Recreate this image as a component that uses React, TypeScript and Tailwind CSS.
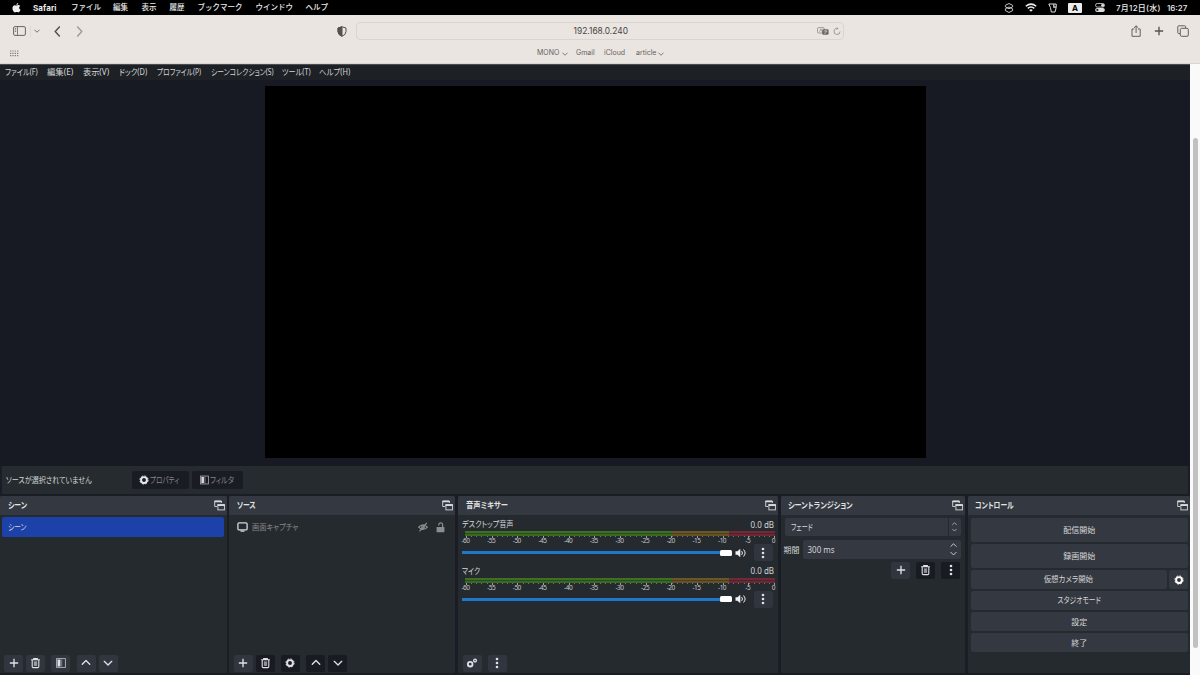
import type { ReactNode } from 'react';
import clsx from 'clsx';

type IconProps = { className?: string };

const macMenu = [
  { label: 'ファイル', w: 'w-[42px]' },
  { label: '編集', w: 'w-[28.5px]' },
  { label: '表示', w: 'w-[28px]' },
  { label: '履歴', w: 'w-[28px]' },
  { label: 'ブックマーク', w: 'w-[58px]' },
  { label: 'ウインドウ', w: 'w-[50px]' },
  { label: 'ヘルプ', w: 'w-[30px]' },
];

const obsMenu = [
  { label: 'ファイル(F)', w: 'w-[42px] scale-x-[.84]' },
  { label: '編集(E)', w: 'w-[36px] scale-x-[.98]' },
  { label: '表示(V)', w: 'w-[35.5px] scale-x-[.96]' },
  { label: 'ドック(D)', w: 'w-[38px] scale-x-[.87]' },
  { label: 'プロファイル(P)', w: 'w-[54px] scale-x-[.79]' },
  { label: 'シーンコレクション(S)', w: 'w-[71px] scale-x-[.8]' },
  { label: 'ツール(T)', w: 'w-[37.5px] scale-x-[.84]' },
  { label: 'ヘルプ(H)', w: 'w-[40px] scale-x-[.87]' },
];

const ticks = [-60, -55, -50, -45, -40, -35, -30, -25, -20, -15, -10, -5, 0];

function Apple() {
  return (
    <svg viewBox="0 0 16 18" className="w-[9px] h-[10px]" fill="#eee">
      <path d="M11 0c.2 1.800-1.300 3.700-3.200 3.700C7.600 2 9.300.2 11 0zM8.100 4.700c.8 0 1.800-.9 3.300-.9 1.300 0 2.600.7 3.300 1.800-2.900 1.600-2.400 5.600.6 6.700-.7 1.900-2.200 4.700-3.900 4.700-1.200 0-1.600-.8-3.100-.8s-2 .8-3.100.8C3 17 .7 12.800.7 9.400c0-3.400 2.200-5.500 4.300-5.500 1.300 0 2.300.8 3.100.8z" />
    </svg>
  );
}

function Chevron({ dir, className }: IconProps & { dir: 'up' | 'down' | 'left' | 'right' }) {
  const d = {
    up: 'M1.500 7.500l4.500-4.500L10.500 7.500',
    down: 'M1.500 4L6 8.500l4.500-4.500',
    left: 'M8 1L3.500 6 8 11',
    right: 'M4 1l4.500 5L4 11',
  }[dir];
  return (
    <svg viewBox="0 0 12 12" className={className} fill="none" stroke="currentColor" strokeWidth="1.600" strokeLinecap="round" strokeLinejoin="round">
      <path d={d} />
    </svg>
  );
}

function Plus({ className }: IconProps) {
  return (
    <svg viewBox="0 0 12 12" className={className} fill="none" stroke="currentColor" strokeWidth="1.600">
      <path d="M6 1v10M1 6h10" />
    </svg>
  );
}

function Trash() {
  return (
    <svg viewBox="0 0 12 12" className="w-[11px] h-[12px]" fill="none" stroke="currentColor" strokeWidth="1.200">
      <path d="M1.200 2.400h9.600M4 2.200V1.200h4v1" />
      <path d="M2.400 2.600v7.200q0 1.200 1.200 1.200h4.800q1.200 0 1.200-1.200V2.600" />
      <path d="M4.200 4.200h3.600v5H4.200z" fill="currentColor" fillOpacity=".6" stroke="none" />
    </svg>
  );
}

function Gear({ className }: IconProps) {
  return (
    <svg viewBox="0 0 12 12" className={className} fill="none" stroke="currentColor">
      <circle cx="6" cy="6" r="3.500" strokeWidth="2.300" />
      <circle cx="6" cy="6" r="4.900" strokeWidth="1.200" strokeDasharray="2.200 1.648" />
    </svg>
  );
}

function Dots() {
  return (
    <svg viewBox="0 0 4 12" className="w-[4px] h-[12px]" fill="currentColor">
      <circle cx="2" cy="2" r="1.300" />
      <circle cx="2" cy="6" r="1.300" />
      <circle cx="2" cy="10" r="1.300" />
    </svg>
  );
}

function Filter({ className }: IconProps) {
  return (
    <svg viewBox="0 0 10 10" className={className} fill="none">
      <rect x=".6" y=".6" width="8.800" height="8.800" stroke="currentColor" strokeOpacity=".75" strokeWidth=".9" />
      <path d="M1.500 1.500h2.900v7H1.500z" fill="currentColor" />
      <path d="M4.700 1.500h1.600v7H4.700z" fill="currentColor" fillOpacity=".35" />
    </svg>
  );
}

function Popout() {
  return (
    <svg viewBox="0 0 11 11" className="w-[11px] h-[11px]" fill="none" stroke="#d8dadd">
      <path d="M3 6.500H.7V1h6.600v2" strokeWidth=".9" />
      <path d="M.5 1.500h7" strokeWidth="1.500" />
      <rect x="3.900" y="4.600" width="6.500" height="5.300" strokeWidth=".9" />
      <path d="M3.500 5.200h7.300" strokeWidth="1.600" />
    </svg>
  );
}

function Speaker() {
  return (
    <svg viewBox="0 0 12 10" className="w-[12px] h-[10px]" fill="none" stroke="#f1f1f1" strokeWidth="1">
      <path d="M.5 3.200h2L5.300.8v8.400L2.500 6.800h-2z" fill="#f1f1f1" stroke="none" />
      <path d="M6.700 3.100q1.500 1.900 0 3.800M8.500 1.500q3.200 3.500 0 7" />
    </svg>
  );
}

// Condensed kana, as the Windows UI fonts set them
function Kana({ center, className, children }: { center?: boolean; className: string; children: ReactNode }) {
  return (
    <span className={clsx('block whitespace-nowrap text-[8.5px]', center ? 'origin-center' : 'origin-left', className)}>{children}</span>
  );
}

function MacBar() {
  return (
    <div className="flex items-center h-[15px] bg-black text-[#ececec] text-[7.5px] font-medium">
      <div className="w-[33px] pl-[12px]"><Apple /></div>
      <span className="w-[38px] text-[8px] font-bold tracking-[0.1px]">Safari</span>
      {macMenu.map((item) => (
        <span key={item.label} className={clsx('shrink-0 whitespace-nowrap', item.w)}>{item.label}</span>
      ))}
      <div className="ml-auto flex items-center pr-[11px]">
        <svg viewBox="0 0 10 10" className="w-[10px] h-[10px] mr-[11px]" fill="none" stroke="#ddd" strokeWidth=".9">
          <path d="M5 .5l3.600 1.800v1.500L5 5.800 1.400 3.800V2.300zM1.400 5.800L5 4l3.600 1.800v1.800L5 9.500 1.400 7.600z" />
        </svg>
        <svg viewBox="0 0 12 9" className="w-[12px] h-[9px] mr-[11px]" fill="none" stroke="#eee" strokeWidth="1.500">
          <path d="M.8 3.300q5.200-4.400 10.400 0M2.700 5.300q3.300-2.700 6.600 0" />
          <path d="M4.200 6.900q1.800-1.300 3.600 0L6 8.700z" fill="#eee" stroke="none" />
        </svg>
        <svg viewBox="0 0 9 10" className="w-[9px] h-[10px] mr-[11px]" fill="none" stroke="#ddd" strokeWidth="1">
          <path d="M.8 1h7.400v3.500L7 9H3.300Q2.800 4 .8 1z" />
          <path d="M5.800 1v3.200h2.300" strokeWidth="1.200" />
        </svg>
        <span className="w-[14px] h-[10px] rounded-[1px] bg-[#ececec] text-black text-[8px] leading-[10.5px] font-bold text-center mr-[13px]">A</span>
        <svg viewBox="0 0 10 9" className="w-[10px] h-[9px] mr-[11px]">
          <rect x=".5" y=".5" width="9" height="3.600" rx="1.800" fill="none" stroke="#ddd" strokeWidth=".8" />
          <circle cx="7.600" cy="2.300" r="1.500" fill="#ddd" />
          <rect x=".2" y="4.900" width="9.600" height="4" rx="1.900" fill="#ddd" />
          <circle cx="2.400" cy="6.900" r="1.100" fill="#222" />
        </svg>
        <span className="w-[51px] text-[8px] tracking-[0.25px] whitespace-nowrap">7月12日(水)</span>
        <span className="w-[22px] text-[8px] whitespace-nowrap">16:27</span>
      </div>
    </div>
  );
}

function SafariBar() {
  return (
    <div className="h-[49px] bg-[#eae5e1] border-b border-[#d9d7d6] text-[#56524f]">
      <div className="flex items-center h-[32px]">
        <svg viewBox="0 0 13 10" className="w-[13px] h-[10px] ml-[12.500px]" fill="none" stroke="#686461" strokeWidth="1">
          <rect x=".6" y=".6" width="11.800" height="8.800" rx="1.300" />
          <path d="M4.500.6v8.800M1.900 2.500h1.300M1.900 4h1.300M1.900 5.500h1.300" strokeWidth=".8" />
        </svg>
        <span className="w-px h-[11px] ml-[4.500px] bg-[#dedad6]" />
        <Chevron dir="down" className="w-[6px] h-[6px] ml-[3px]" />
        <Chevron dir="left" className="w-[11px] h-[11px] ml-[12px]" />
        <Chevron dir="right" className="w-[11px] h-[11px] ml-[10.500px] text-[#a09c99]" />
        <svg viewBox="0 0 10 11" className="w-[10px] h-[11px] ml-[252.500px]" fill="none" stroke="#55514e" strokeWidth="1">
          <path d="M5 .8L9 2v3.500Q9 8.800 5 10.300 1 8.800 1 5.500V2z" />
          <path d="M5 .8L1 2v3.500Q1 8.800 5 10.300z" fill="#55514e" />
        </svg>
        <div className="flex items-center w-[488px] h-[18px] ml-[9px] rounded-[4px] border border-[#d9d5d1]">
          <span className="flex-1 pl-[28px] text-center text-[8.400px] leading-none text-[#474442]">192.168.0.240</span>
          <svg viewBox="0 0 12 9" className="w-[12px] h-[9px] mr-[4px]" fill="none">
            <rect x=".5" y=".6" width="6.800" height="5.400" rx="1.300" stroke="#8c8885" strokeWidth=".8" />
            <path d="M2.500 4.800L4 1.800l1.200 3" stroke="#8c8885" strokeWidth=".7" />
            <rect x="5.200" y="2.300" width="6.400" height="5.500" rx="1.300" fill="#6c6865" />
            <path d="M6.800 4h3.400M8.500 3.200V4M7.200 6.500q2.300-.8 2.500-2.500" stroke="#eae5e1" strokeWidth=".6" />
          </svg>
          <svg viewBox="0 0 8 9" className="w-[8px] h-[9px] mr-[2.500px]" fill="none" stroke="#8c8885" strokeWidth=".8">
            <path d="M7 4.500a3 3 0 1 1-2.200-2.900L4 .5M4.800 1.600L3.600 2.800" />
          </svg>
        </div>
        <svg viewBox="0 0 10 12" className="w-[10px] h-[12px] ml-[287px]" fill="none" stroke="#63605d" strokeWidth="1">
          <path d="M3.300 4H1v7.300h8.200V4H6.900M5.100 8V.9M3 2.800L5.100.8l2.100 2" />
        </svg>
        <Plus className="w-[10px] h-[10px] ml-[13px]" />
        <svg viewBox="0 0 12 12" className="w-[12px] h-[12px] ml-[13px]" fill="none" stroke="#63605d" strokeWidth="1">
          <path d="M3 8.600H1.700q-.9 0-.9-.9V1.700q0-.9.9-.9h6q.9 0 .9.900V3" />
          <rect x="3.300" y="3.300" width="8" height="8" rx="1.300" />
        </svg>
      </div>
      <div className="flex items-center h-[12px] text-[7px] text-[#65615e]">
        <svg viewBox="0 0 9 7" className="w-[9px] h-[7px] ml-[10px]" stroke="#817d7a" strokeWidth="1.200" strokeDasharray="1.300 1.030">
          <path d="M0 1h9M0 3.300h9M0 5.600h9" />
        </svg>
        <div className="flex items-center ml-[518px] pt-px whitespace-nowrap">
          <span className="w-[24.500px]">MONO</span>
          <Chevron dir="down" className="w-[6px] h-[6px] mr-[8.500px]" />
          <span className="w-[28px]">Gmail</span>
          <span className="w-[32px]">iCloud</span>
          <span className="w-[22px]">article</span>
          <Chevron dir="down" className="w-[6px] h-[6px]" />
        </div>
      </div>
    </div>
  );
}

function ToolButton({ dark, className, children }: { dark?: boolean; className?: string; children: ReactNode }) {
  return (
    <button className={clsx('flex shrink-0 items-center justify-center w-[19px] h-[17px] rounded-[2px] text-[#dfe1e4]', dark ? 'bg-[#181b22]' : 'bg-[#31353e]', className)}>
      {children}
    </button>
  );
}

function Dock({ title, squeeze, className, children }: { title: string; squeeze: string; className: string; children: ReactNode }) {
  return (
    <section className={clsx('flex shrink-0 flex-col h-[177px] bg-[#252a2f]', className)}>
      <header className="flex items-center justify-between h-[19px] pl-[7.500px] pr-[2px] rounded-t-[2px] bg-[#343840] font-semibold text-[#e2e3e5]">
        <Kana className={squeeze}>{title}</Kana>
        <Popout />
      </header>
      {children}
    </section>
  );
}

function Mixer({ name, squeeze }: { name: string; squeeze: string }) {
  return (
    <div className="h-[46.500px]">
      <div className="flex items-center justify-between h-[13px] pr-[4px]">
        <Kana className={squeeze}>{name}</Kana>
        <span>0.0 dB</span>
      </div>
      <div className="flex h-[5px] ml-[3px] w-[310px]">
        <div className="w-[207px] bg-[linear-gradient(#3d7023_40%,#2b4a1f_40%,#2b4a1f_60%,#3a6922_60%)]" />
        <div className="w-[57px] bg-[linear-gradient(#6b5726_40%,#4b3e22_40%,#4b3e22_60%,#665325_60%)]" />
        <div className="flex-1 bg-[linear-gradient(#712936_40%,#4e222b_40%,#4e222b_60%,#6c2834_60%)]" />
      </div>
      <div className="ml-[4px] w-[309px] h-px bg-[repeating-linear-gradient(90deg,#70757a_0_1px,transparent_1px_5.140px)]" />
      <div className="flex justify-between w-[320px] -ml-[2.500px] h-[7px] text-[6.500px] leading-[7px] text-[#c6c8ca] tracking-[-0.500px]">
        {ticks.map((t) => (
          <span key={t} className="relative w-[12px] text-center">
            <i className="absolute left-[6.500px] -top-px w-px h-[2px] bg-[#a0a2a4]" />
            {t}
          </span>
        ))}
      </div>
      <div className="flex items-center h-[17px]">
        <div className="w-[258px] h-[3px] bg-[#1f76ca]" />
        <div className="w-[12px] h-[6px] rounded-[1.500px] bg-white mr-[3px]" />
        <Speaker />
        <ToolButton className="ml-[6.500px]"><Dots /></ToolButton>
      </div>
    </div>
  );
}

function ControlButton({ className, children }: { className: string; children: ReactNode }) {
  return (
    <button className={clsx('flex items-center justify-center rounded-[2px] bg-[#343840]', className)}>{children}</button>
  );
}

function Obs() {
  return (
    <div className="w-[1190px] h-[611px] bg-[#1a1d25] text-[8px] leading-none text-[#d4d6d8] [font-family:'Noto_Sans','Noto_Sans_CJK_JP',sans-serif] [font-feature-settings:'palt']">
      <nav className="flex items-center h-[16px] pl-[5px] bg-[#1d2126] border-t border-[#4a4c50] text-[8.5px] whitespace-nowrap">
        {obsMenu.map((item) => (
          <span key={item.label} className={clsx('shrink-0 origin-left', item.w)}>{item.label}</span>
        ))}
      </nav>
      <div className="h-[386px] pt-[6px] pl-[265px] bg-[#181a23]">
        <div className="w-[660.500px] h-[371.500px] bg-black" />
      </div>
      <div className="flex items-center h-[28px] ml-[2px] mr-[2px] pl-[4px] bg-[#262b2f]">
        <Kana className="w-[126px] scale-x-[.83]">ソースが選択されていません</Kana>
        <button className="flex items-center w-[57px] h-[18px] pl-[7px] gap-[1px] rounded-[2px] bg-[#1a1c24] text-[#858789]">
          <Gear className="w-[10px] h-[10px] shrink-0 text-[#e8e8e8]" /><Kana className="scale-x-[.77]">プロパティ</Kana>
        </button>
        <button className="flex items-center w-[51px] h-[18px] ml-[3px] pl-[8px] gap-[1px] rounded-[2px] bg-[#1a1c24] text-[#858789]">
          <Filter className="w-[9px] h-[10px] shrink-0 text-[#d8d8d8]" /><Kana className="scale-x-[.83]">フィルタ</Kana>
        </button>
      </div>
      <div className="flex h-[181px] pt-[2px]">
        <Dock title="シーン" squeeze="scale-x-[.81]" className="w-[227px]">
          <div className="flex items-center w-[222px] h-[20px] ml-[2px] mt-[2px] pl-[6px] rounded-[2px] bg-[#1c41a8]">
            <Kana className="scale-x-[.79]">シーン</Kana>
          </div>
          <div className="flex mt-auto mb-[1.500px] pl-[4px]">
            <ToolButton><Plus className="w-[10px] h-[10px]" /></ToolButton>
            <ToolButton className="ml-[3px]"><Trash /></ToolButton>
            <ToolButton className="ml-[6px]"><Filter className="w-[10px] h-[10px]" /></ToolButton>
            <ToolButton className="ml-[6.500px]"><Chevron dir="up" className="w-[10px] h-[10px]" /></ToolButton>
            <ToolButton className="ml-[3px]"><Chevron dir="down" className="w-[10px] h-[10px]" /></ToolButton>
          </div>
        </Dock>
        <Dock title="ソース" squeeze="scale-x-[.8]" className="w-[226px] ml-[2px]">
          <div className="flex items-center h-[24px] pl-[8px] text-[#85888b]">
            <svg viewBox="0 0 11 10" className="w-[11px] h-[10px] mr-[4px]" fill="none" stroke="#d5d7d9" strokeWidth="1.300">
              <rect x=".9" y=".9" width="9.200" height="7" rx="1.200" />
              <path d="M3.500 9.100h4" />
            </svg>
            <Kana className="scale-x-[.85]">画面キャプチャ</Kana>
            <svg viewBox="0 0 10 10" className="w-[10px] h-[10px] ml-auto mr-[8px]" fill="none" stroke="#8b8e90" strokeWidth="1.200">
              <path d="M.6 5.200Q5 .4 9.400 5.200 5 9.600.6 5.200zM8.800.8L1.500 9.400" />
              <circle cx="5" cy="5" r="1.300" />
            </svg>
            <svg viewBox="0 0 9 11" className="w-[9px] h-[11px] mr-[10px]" fill="none" stroke="#8b8e90" strokeWidth="1.200">
              <path d="M2.800 3.500v-.8q0-1.900 1.900-1.900t1.900 1.900V5" />
              <rect x=".6" y="5" width="7.800" height="5.300" rx=".6" fill="#8b8e90" stroke="none" />
            </svg>
          </div>
          <div className="flex mt-auto mb-[1.500px] pl-[4.500px]">
            <ToolButton><Plus className="w-[10px] h-[10px]" /></ToolButton>
            <ToolButton dark className="ml-[3px]"><Trash /></ToolButton>
            <ToolButton dark className="ml-[6px]"><Gear className="w-[10px] h-[10px]" /></ToolButton>
            <ToolButton dark className="ml-[6.500px]"><Chevron dir="up" className="w-[10px] h-[10px]" /></ToolButton>
            <ToolButton dark className="ml-[3px]"><Chevron dir="down" className="w-[10px] h-[10px]" /></ToolButton>
          </div>
        </Dock>
        <Dock title="音声ミキサー" squeeze="scale-x-[.86]" className="w-[320px] ml-[3px]">
          <div className="pt-[3px] pl-[4px]">
            <Mixer name="デスクトップ音声" squeeze="scale-x-[.84]" />
            <Mixer name="マイク" squeeze="scale-x-[.8]" />
          </div>
          <div className="flex mt-auto mb-[1.500px] pl-[4.500px]">
            <ToolButton>
              <svg viewBox="0 0 12 12" className="w-[12px] h-[12px]" fill="none" stroke="currentColor">
                <circle cx="4.200" cy="7.200" r="2.300" strokeWidth="1.800" />
                <circle cx="9" cy="3.600" r="1.400" strokeWidth="1.300" />
              </svg>
            </ToolButton>
            <ToolButton className="ml-[6px]"><Dots /></ToolButton>
          </div>
        </Dock>
        <Dock title="シーントランジション" squeeze="scale-x-[.84]" className="w-[184.500px] ml-[2.500px]">
          <div className="flex items-center w-[176px] h-[18px] mt-[3px] ml-[4px] rounded-[2px] bg-[#343840]">
            <div className="flex-1 pl-[6.500px]"><Kana className="scale-x-[.75]">フェード</Kana></div>
            <div className="flex flex-col items-center justify-center w-[13px] h-full border-l border-[#24272d]">
              <Chevron dir="up" className="w-[5px] h-[6px]" />
              <Chevron dir="down" className="w-[5px] h-[6px]" />
            </div>
          </div>
          <div className="flex items-center h-[19px] mt-[4px] ml-[3px]">
            <span className="w-[19px]">期間</span>
            <div className="flex items-center w-[158px] h-full rounded-[2px] bg-[#343840]">
              <span className="flex-1 pl-[5px]">300 ms</span>
              <div className="flex flex-col items-center w-[14px] gap-[1px]">
                <Chevron dir="up" className="w-[7px] h-[7px]" />
                <Chevron dir="down" className="w-[7px] h-[7px]" />
              </div>
            </div>
          </div>
          <div className="flex justify-end gap-[6px] mt-[2.500px] pr-[5px]">
            <ToolButton><Plus className="w-[10px] h-[10px]" /></ToolButton>
            <ToolButton dark><Trash /></ToolButton>
            <ToolButton dark><Dots /></ToolButton>
          </div>
        </Dock>
        <Dock title="コントロール" squeeze="scale-x-[.8]" className="w-[222.500px] ml-[2.500px]">
          <div className="flex flex-col gap-[2px] pt-[3px] pl-[3px] pr-[2px]">
            <ControlButton className="h-[24px]">配信開始</ControlButton>
            <ControlButton className="h-[24px]">録画開始</ControlButton>
            <div className="flex gap-[2px]">
              <ControlButton className="flex-1 h-[19px]"><Kana center className="scale-x-[.87]">仮想カメラ開始</Kana></ControlButton>
              <ControlButton className="w-[19px] h-[19px] text-white"><Gear className="w-[10px] h-[10px]" /></ControlButton>
            </div>
            <ControlButton className="h-[19px]"><Kana center className="scale-x-[.8]">スタジオモード</Kana></ControlButton>
            <ControlButton className="h-[19px]">設定</ControlButton>
            <ControlButton className="h-[19px]">終了</ControlButton>
          </div>
        </Dock>
      </div>
    </div>
  );
}

export default function App() {
  return (
    <div className="w-[1200px] h-[675px] overflow-hidden bg-[#fafafa] font-['Inter','Noto_Sans_CJK_JP',sans-serif]">
      <MacBar />
      <SafariBar />
      <div className="flex">
        <Obs />
        <div className="w-[10px] pt-[74px] pl-[3px]">
          <div className="w-[5px] h-[510px] rounded-full bg-[#c1c1c1]" />
        </div>
      </div>
    </div>
  );
}
